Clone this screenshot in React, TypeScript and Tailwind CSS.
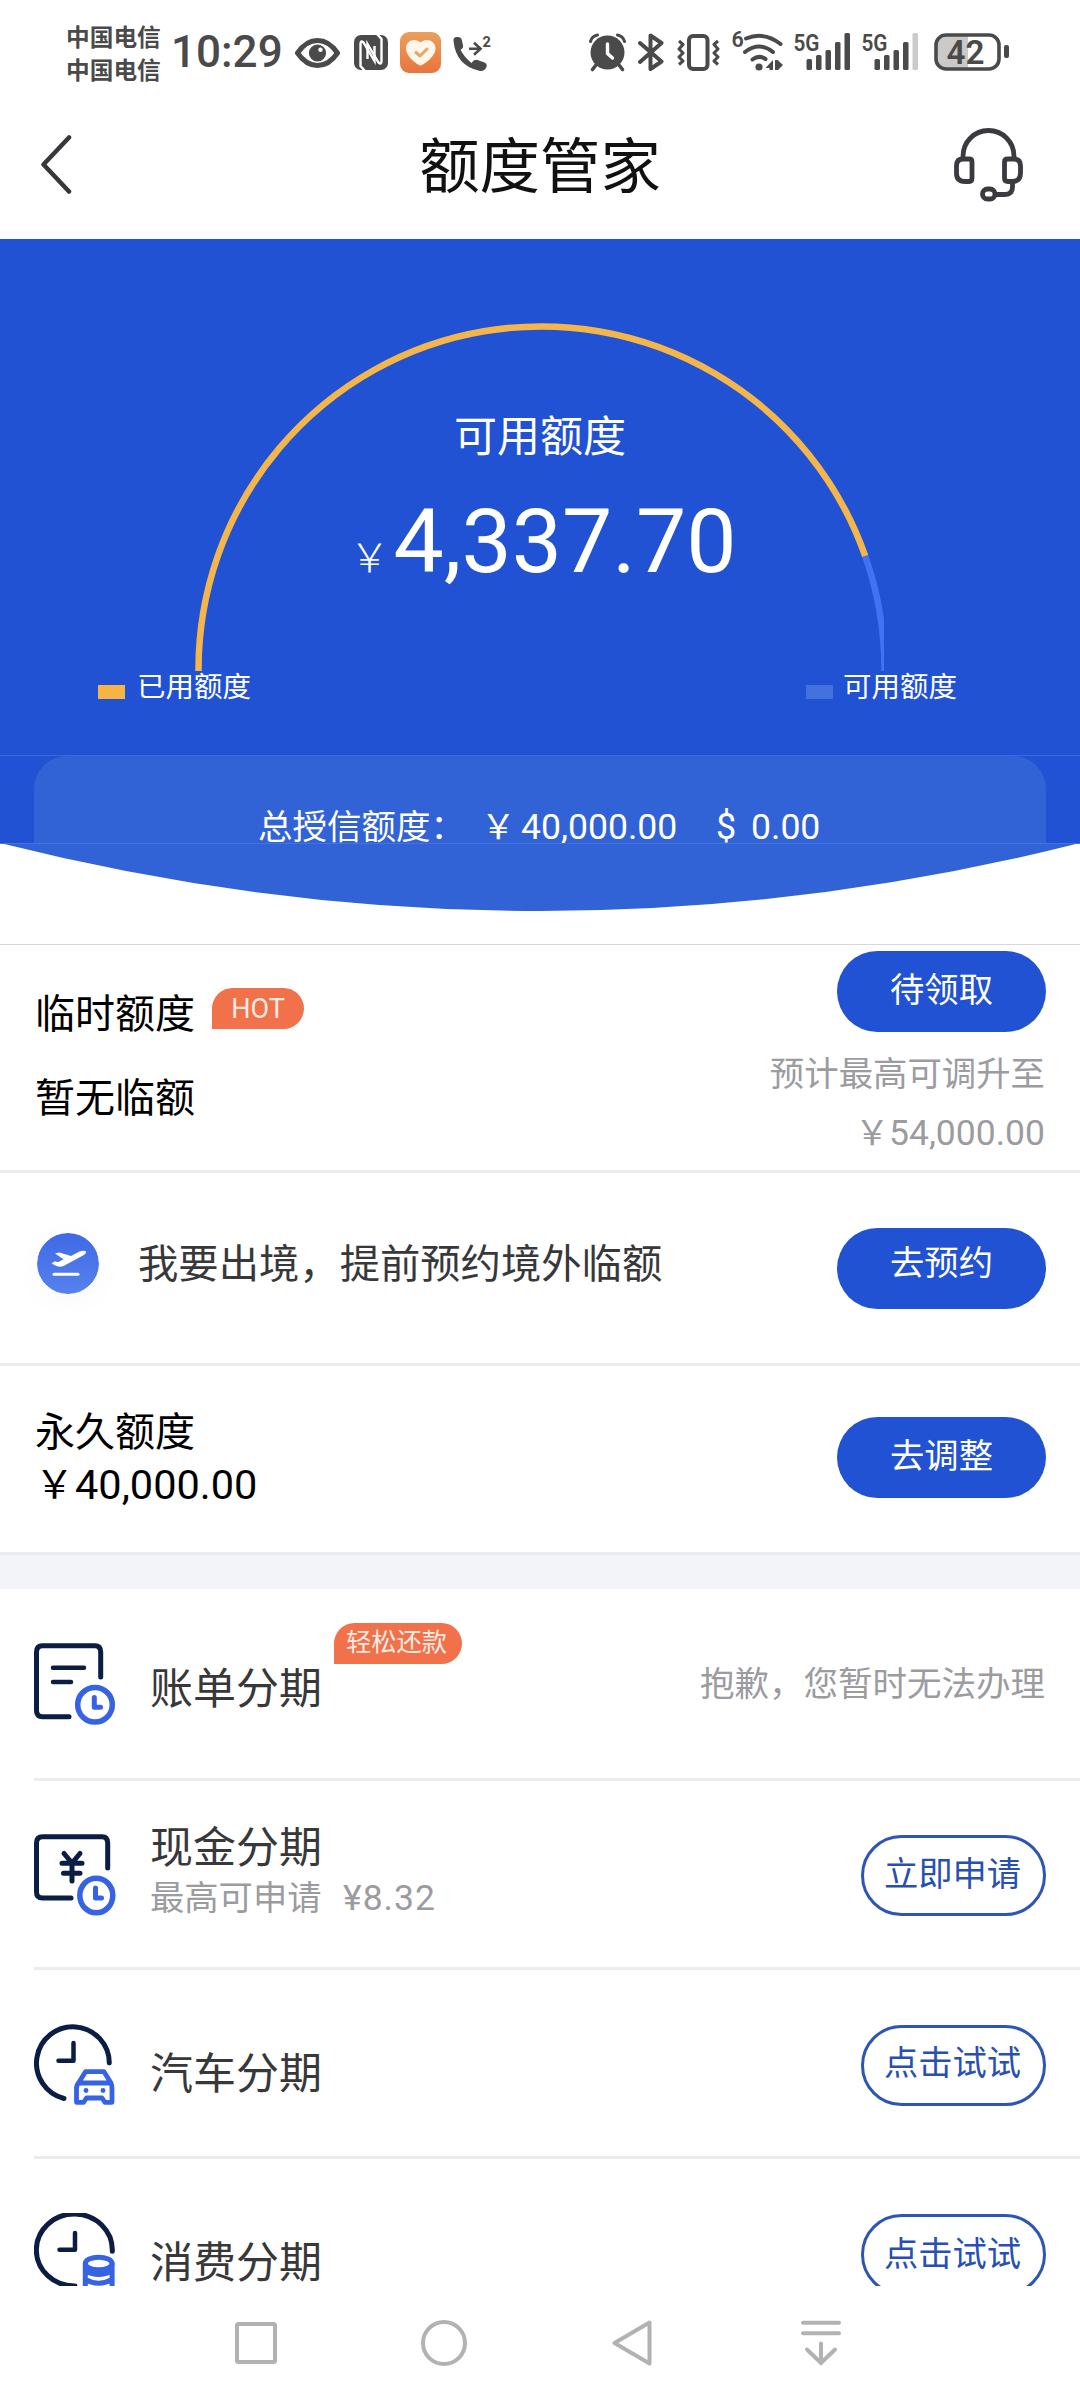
import React from "react";
import clsx from "clsx";

// --- Status bar icons ---
const EyeIcon = () => (
  <svg className="ml-[14px] h-[41px] w-[45px]" viewBox="0 0 45 41" fill="none">
    <path d="M2.5 21Q11 8.5 22.5 8.5T42.5 21Q34 33.5 22.5 33.5T2.5 21Z" stroke="#4a4a4a" strokeWidth="5" strokeLinejoin="round" />
    <circle cx="22.5" cy="21" r="8.6" fill="#4a4a4a" />
    <circle cx="25.5" cy="17.8" r="2.2" fill="#fff" />
  </svg>
);

const NfcIcon = () => (
  <svg className="ml-[14px] h-[41px] w-[34px]" viewBox="0 0 34 41" fill="none">
    <rect x="0" y="3" width="34" height="35" rx="7" fill="#4a4a4a" />
    <path d="M11 39L6.500 34V12Q6.500 8 9.500 10.500L20.500 29V14" stroke="#fff" strokeWidth="2.400" />
    <path d="M23 2L27.500 7V29Q27.500 33 24.500 30.500L13.500 12V27" stroke="#fff" strokeWidth="2.400" />
  </svg>
);

const HealthIcon = () => (
  <svg className="ml-[12px] h-[41px] w-[41px]" viewBox="0 0 41 41" fill="none">
    <defs>
      <linearGradient id="health" x1="0" y1="0" x2="0" y2="1">
        <stop offset="0" stopColor="#e9a05c" />
        <stop offset="1" stopColor="#e9743d" />
      </linearGradient>
    </defs>
    <rect width="41" height="41" rx="9" fill="url(#health)" />
    <path d="M20.500 33.500C18.500 33.500 6 25 6 16.500C6 8 15.500 5.500 20.500 10.500C25.500 5.500 35.500 8 35.500 16.500C35.500 25 22.500 33.500 20.500 33.500Z" fill="#fff6ea" />
    <path d="M16 20.500L20 24L27 17" stroke="#e5a868" strokeWidth="3" strokeLinecap="round" strokeLinejoin="round" />
  </svg>
);

const CallIcon = () => (
  <svg className="ml-[12px] h-[41px] w-[38px] overflow-visible" viewBox="0 0 38 41" fill="none">
    <path
      d="M.5 9Q0 5 4 5Q8 4.500 8.800 8L10 13.500Q10.500 16.500 7.500 17.800Q11 25 18.500 31Q21 27 24.500 28L31.500 30.500Q34.500 32 33.500 35Q31.500 39.500 27 39Q3 34 .5 9Z"
      fill="#4a4a4a"
    />
    <path d="M16 16.700H27M21 10.700L27.500 16.700L21 22.700" stroke="#4a4a4a" strokeWidth="2.600" />
    <text x="29.500" y="15" fontSize="14.500" fontWeight="700" fontFamily="Roboto, sans-serif" fill="#4a4a4a">2</text>
  </svg>
);

const AlarmIcon = () => (
  <svg className="h-[41px] w-[37px]" viewBox="0 0 37 41" fill="none">
    <circle cx="18.500" cy="20.500" r="17" fill="#4a4a4a" />
    <path d="M1.500 9.500Q3 4 8.500 3M35.500 9.500Q34 4 28.500 3" stroke="#4a4a4a" strokeWidth="3" strokeLinecap="round" />
    <path d="M7 33L3.500 37.500M30 33L33.500 37.500" stroke="#4a4a4a" strokeWidth="3.600" strokeLinecap="round" />
    <path d="M18.500 12V21.500L23.500 26" stroke="#fff" strokeWidth="3.400" strokeLinecap="round" />
  </svg>
);

const BluetoothIcon = () => (
  <svg className="ml-[12px] h-[41px] w-[26px]" viewBox="0 0 26 41" fill="none">
    <path d="M2 11L23.500 29.500L12.500 37V3.500L23.500 11L2 30" stroke="#4a4a4a" strokeWidth="4" strokeLinecap="round" strokeLinejoin="round" />
  </svg>
);

const VibrateIcon = () => (
  <svg className="ml-[13px] h-[41px] w-[43px]" viewBox="0 0 43 41" fill="none">
    <rect x="12" y="4" width="18.500" height="33" rx="4" stroke="#4a4a4a" strokeWidth="4" />
    <path d="M2 9L6 12.500L2 17L6 21L2 25L6 29L2 32.500" stroke="#4a4a4a" strokeWidth="3" strokeLinejoin="round" />
    <path d="M41 9L37 12.500L41 17L37 21L41 25L37 29L41 32.500" stroke="#4a4a4a" strokeWidth="3" strokeLinejoin="round" />
  </svg>
);

const WifiIcon = () => (
  <svg className="ml-[12px] h-[41px] w-[51px] overflow-visible" viewBox="0 0 51 41" fill="none">
    <text x="-.5" y="15" fontSize="21.500" fontWeight="600" fontFamily="Roboto, sans-serif" fill="#4a4a4a">6</text>
    <path d="M14 6.500Q32 -1 48.500 12" stroke="#4a4a4a" strokeWidth="4" strokeLinecap="round" />
    <path d="M13 20Q27.500 9 41 20" stroke="#4a4a4a" strokeWidth="4" strokeLinecap="round" />
    <path d="M20.500 27.500Q27 22.500 33.500 27" stroke="#4a4a4a" strokeWidth="4" strokeLinecap="round" />
    <circle cx="27" cy="35" r="3.600" fill="#4a4a4a" />
    <path d="M41 38V28L33.500 36H37.500V38ZM43 38V28H45.500L51 33L46 38Z" fill="#4a4a4a" />
  </svg>
);

const SignalIcon = ({ full }: { full: boolean }) => (
  <svg className="ml-[11px] h-[41px] w-[57px] overflow-visible" viewBox="0 0 57 41" fill="#4a4a4a">
    <text x="-.5" y="19" fontSize="24.500" fontWeight="600" textLength="26" lengthAdjust="spacingAndGlyphs" fontFamily="Roboto, sans-serif">
      5G
    </text>
    <rect x="12.500" y="27" width="5.500" height="11" rx="1.500" />
    <rect x="22" y="23" width="5.500" height="15" rx="1.500" />
    <rect x="31.500" y="18" width="5.500" height="20" rx="1.500" />
    <rect x="41" y="10" width="5.500" height="28" rx="1.500" />
    <rect x="50.500" y="1" width="5.500" height="37" rx="1.500" fill={full ? "#4a4a4a" : "#cacaca"} />
  </svg>
);

const BatteryIcon = () => (
  <svg className="ml-[15px] h-[41px] w-[75px]" viewBox="0 0 75 41" fill="none">
    <path d="M34 3H12Q2 3 2 13V26Q2 36 12 36H34Z" fill="#cacaca" />
    <rect x="2" y="3" width="63" height="34" rx="10" stroke="#4a4a4a" strokeWidth="3.600" />
    <rect x="70" y="13" width="5" height="13" rx="2" fill="#4a4a4a" />
    <text x="12.500" y="32" fontSize="34" fontWeight="600" textLength="38" lengthAdjust="spacingAndGlyphs" fontFamily="Roboto, sans-serif" fill="#4a4a4a">
      42
    </text>
  </svg>
);

const HeadsetIcon = () => (
  <svg className="h-[74px] w-[69px]" viewBox="0 0 69 74" fill="none" stroke="#3a3a3f" strokeWidth="4.800">
    <path d="M9 31V28A25.500 25.500 0 0 1 60 28V31" />
    <path d="M9 31H15Q18 31 18 34V50Q18 53.500 15 53.500H11Q2.500 53.500 2.500 45V38Q2.500 31 9 31Z" />
    <path d="M60 31H54Q50.500 31 50.500 34V50Q50.500 53.500 54 53.500H58Q66.500 53.500 66.500 45V38Q66.500 31 60 31Z" />
    <path d="M58.500 54V59Q58.500 66.500 51 66.500H42" />
    <rect x="28.500" y="61" width="12.500" height="10" rx="5" />
  </svg>
);

// --- Row icons ---
const TakeoffIcon = () => (
  <svg className="h-[61px] w-[62px] rounded-full shadow-[0_6px_30px_rgba(0,0,0,0.03)]" viewBox="0 0 62 61" fill="none">
    <defs>
      <linearGradient id="takeoff" x1="0" y1="0" x2="0" y2="1">
        <stop offset="0" stopColor="#4069e6" />
        <stop offset="1" stopColor="#5682ee" />
      </linearGradient>
    </defs>
    <ellipse cx="31" cy="30.500" rx="31" ry="30.500" fill="url(#takeoff)" />
    <path d="M18 20.500L22.500 19.500L34 23L42 18.800Q46 17.200 49 18.200Q49.500 20.500 46 22.500L27.500 32.500Q23 34.800 19.500 33L14.500 30.500L18 28.200L21 29.200L26.500 26.300Z" fill="#fff" />
    <path d="M17 41.300H41" stroke="#fff" strokeWidth="3" strokeLinecap="round" />
  </svg>
);

const iconClass = "h-[82px] w-[82px] shrink-0";

const BillIcon = () => (
  <svg className={iconClass} viewBox="0 0 82 82" fill="none" strokeLinecap="round" strokeLinejoin="round" strokeWidth="5">
    <path d="M66.700 34V9Q66.700 2.700 61 2.700H8.500Q2.500 2.700 2.500 9V67.500Q2.500 73.700 8.500 73.700H35" stroke="#0b1d42" />
    <path d="M19 24.700H50M19 39H37" stroke="#0b1d42" strokeWidth="4.500" />
    <circle cx="61" cy="61.700" r="17.300" stroke="#3563e3" strokeWidth="5.500" />
    <path d="M60.300 54.500V64.200H66.500" stroke="#3563e3" />
  </svg>
);

const CashIcon = () => (
  <svg className={iconClass} viewBox="0 0 82 82" fill="none" strokeLinecap="round" strokeLinejoin="round" strokeWidth="5">
    <path d="M73.700 34V9Q73.700 2.700 68 2.700H8.500Q2.500 2.700 2.500 9V58Q2.500 64 8.500 64H37" stroke="#0b1d42" />
    <path d="M30 19.500L38 29L46 19.500M28 29.300H48M29.500 39.300H46M38 29V47" stroke="#0b1d42" />
    <ellipse cx="62.300" cy="61.500" rx="16.500" ry="17.300" stroke="#3563e3" strokeWidth="5.500" />
    <path d="M61.500 54V64H67.500" stroke="#3563e3" />
  </svg>
);

const CarIcon = () => (
  <svg className={iconClass} viewBox="0 0 82 82" fill="none" strokeLinecap="round" strokeLinejoin="round" strokeWidth="5">
    <path d="M75.300 39A36.400 36.400 0 1 0 30 74.500" stroke="#0b1d42" />
    <path d="M39.500 19V36.700H24.500" stroke="#0b1d42" strokeWidth="4.500" />
    <path d="M44.500 59L51.500 47.700H70L77 59ZM44.500 59Q42.500 61 42.500 65V78.300H49.500L52.500 74H68L71 78.300H78V65Q78 61 77 59" stroke="#3563e3" strokeWidth="4.800" />
    <circle cx="52" cy="66.500" r="2.400" fill="#3563e3" />
    <circle cx="69" cy="66.500" r="2.400" fill="#3563e3" />
  </svg>
);

const CoinsIcon = () => (
  <svg className={iconClass} viewBox="0 0 82 82" fill="none" strokeLinecap="round" strokeLinejoin="round" strokeWidth="5">
    <path d="M78.300 38.300A38 36 0 1 0 41 73" stroke="#0b1d42" />
    <path d="M41 20V36.700H25.500" stroke="#0b1d42" strokeWidth="4.500" />
    <ellipse cx="64.700" cy="50.500" rx="13.400" ry="6.300" stroke="#3563e3" />
    <path d="M51.300 51V82M78.100 51V82M51.300 57.500Q64.700 65.500 78.100 57.500M51.300 66.500Q64.700 74 78.100 66.500" stroke="#3563e3" />
  </svg>
);

// --- Shared pieces ---
const SolidButton = ({ children, className }: { children: string; className?: string }) => (
  <button
    type="button"
    className={clsx("flex h-[81px] w-[209px] shrink-0 items-center justify-center rounded-full bg-[#2152d3] text-[34.3px] leading-[40px] text-white", className)}
  >
    {children}
  </button>
);

const OutlineButton = ({ children, className }: { children: string; className?: string }) => (
  <button
    type="button"
    className={clsx("flex h-[81px] w-[185px] shrink-0 items-center justify-center rounded-full border-[3px] border-[#2c55b6] pr-[2px] text-[34.3px] leading-[40px] text-[#2850b4]", className)}
  >
    {children}
  </button>
);

const Badge = ({ children, className }: { children: string; className?: string }) => (
  <span
    className={clsx("flex h-[41px] items-center justify-center rounded-[21px] rounded-bl-none bg-[#f0714a] text-[#fdebe2]", className)}
  >
    {children}
  </span>
);

interface PlanRowProps {
  icon: React.ReactNode;
  children: React.ReactNode;
  action: React.ReactNode;
  className?: string;
}

const PlanRow = ({ icon, children, action, className }: PlanRowProps) => (
  <div className={clsx("ml-[34px] flex min-h-[189px] shrink-0 items-center border-b-[3px] border-[#ececec] pt-[4px] pr-[34px]", className)}>
    {icon}
    <div className="ml-[34px] flex-1 text-[43px] leading-[56px] text-[#38383a]">{children}</div>
    {action}
  </div>
);

const App = () => {
  return (
    <div className="flex h-[2400px] w-[1080px] flex-col overflow-hidden bg-white font-['Roboto','Noto_Sans_CJK_SC',sans-serif] text-black">
      {/* Status bar */}
      <div className="flex h-[104px] shrink-0 items-center justify-between pr-[71px] pl-[66px] text-[#4a4a4a]">
        <div className="flex items-center">
          <div className="w-[96px] pt-[5px] text-[23.7px] leading-[33px] font-bold whitespace-nowrap">
            <p>中国电信</p>
            <p>中国电信</p>
          </div>
          <span className="ml-[9px] w-[110px] text-[44px] leading-[50px] font-medium">10:29</span>
          <EyeIcon />
          <NfcIcon />
          <HealthIcon />
          <CallIcon />
        </div>
        <div className="flex items-center">
          <AlarmIcon />
          <BluetoothIcon />
          <VibrateIcon />
          <WifiIcon />
          <SignalIcon full />
          <SignalIcon full={false} />
          <BatteryIcon />
        </div>
      </div>

      {/* Header */}
      <header className="mb-[13px] flex h-[122px] shrink-0 items-center justify-between pr-[57px] pl-[39px]">
        <svg className="h-[60px] w-[69px]" viewBox="0 0 69 60" fill="none">
          <path d="M30 2.500L4.500 29.500L30 56.500" stroke="#38383c" strokeWidth="4.500" strokeLinecap="round" strokeLinejoin="round" />
        </svg>
        <h1 className="mr-[-18px] pt-[5px] text-[60.4px] leading-[72px] text-[#111]">额度管家</h1>
        <HeadsetIcon />
      </header>

      <main className="flex h-[2047px] shrink-0 flex-col overflow-hidden">
        {/* Gauge */}
        <section className="relative h-[517px] shrink-0 border-b border-[#3a6adb] bg-[#2152d3] pt-[170px] text-white">
          <svg className="absolute top-0 left-0 h-[516px] w-[884px]" viewBox="0 0 884 516" fill="none" strokeWidth="6.500">
            <path d="M865.200 317A343 343 0 0 1 884.500 430.500V432" stroke="#4272f2" />
            <path d="M198.500 432V430.500A343 343 0 0 1 865.200 317" stroke="#f4b54a" />
          </svg>
          <p className="text-center text-[43px] leading-[56px]">可用额度</p>
          <p className="mt-[27px] flex items-baseline justify-center pl-[6px] leading-[100px]">
            <span className="w-[44px] text-[40px] font-light">￥</span>
            <span className="text-[89.5px]">4,337.70</span>
          </p>
          <div className="mt-[64px] flex justify-between pr-[123px] pl-[98px] text-[28.5px] leading-[30px]">
            <span className="flex items-center">
              <i className="mt-[7px] mr-[12px] h-[14px] w-[27px] bg-[#f6b440]" />
              已用额度
            </span>
            <span className="flex items-center">
              <i className="mt-[7px] mr-[10px] h-[14px] w-[27px] bg-[#4372df]" />
              可用额度
            </span>
          </div>
        </section>

        {/* Total credit */}
        <section className="h-[87px] shrink-0 bg-[#2152d3] px-[34px] text-[34.5px] leading-[40px] text-white">
          <div className="flex h-full rounded-t-[33px] bg-[#3263d6] pt-[51px] pl-[224px] whitespace-nowrap">
            <span className="w-[223px]">总授信额度：</span>
            <span className="w-[40px]">￥</span>
            <span className="w-[195px] text-[35.6px]">40,000.00</span>
            <span className="w-[35px] text-[36px]">$</span>
            <span className="text-[35.6px]">0.00</span>
          </div>
        </section>
        <svg className="h-[70px] w-[1080px] shrink-0" viewBox="0 0 1080 70" fill="none">
          <path d="M0 0H1080Q540 136 0 0Z" fill="#3263d6" />
          <path d="M0 .5H1080" stroke="#4373df" />
        </svg>

        {/* Temporary limit */}
        <section className="mt-[31px] flex h-[229px] shrink-0 justify-between border-t border-b-[3px] border-t-[#d6d8dc] border-b-[#ececec] pr-[34px] pl-[35px]">
          <div className="pt-[42px] text-[40px] leading-[56px]">
            <div className="flex">
              <h2>临时额度</h2>
              <Badge className="mt-[1px] ml-[17px] w-[92px] text-[27px]">HOT</Badge>
            </div>
            <p className="mt-[28px]">暂无临额</p>
          </div>
          <div className="flex flex-col items-end pt-[6px] text-[34.4px] leading-[40px] text-[#9b9ba0]">
            <SolidButton className="pb-[3px]">待领取</SolidButton>
            <p className="mt-[22px] mr-[1px]">预计最高可调升至</p>
            <p className="mt-[19px] mr-[1px] flex">
              <span className="w-[34px]">￥</span>
              <span className="text-[35.5px]">54,000.00</span>
            </p>
          </div>
        </section>

        {/* Overseas limit */}
        <section className="flex h-[193px] shrink-0 items-center border-b-[3px] border-[#ececec] pr-[34px] pl-[37px]">
          <div className="mb-[10px] flex flex-1 items-center">
            <TakeoffIcon />
            <p className="ml-[39px] pt-[4px] text-[40.35px] leading-[56px] text-[#38383a]">我要出境，提前预约境外临额</p>
          </div>
          <SolidButton className="pb-[10px]">去预约</SolidButton>
        </section>

        {/* Permanent limit */}
        <section className="flex h-[189px] shrink-0 items-center justify-between border-b-[3px] border-[#e9ebee] pr-[34px] pb-[3px] pl-[35px]">
          <div className="text-[40px] leading-[54px]">
            <h2 className="mt-[3px] mb-[-2px]">永久额度</h2>
            <p className="flex">
              <span className="w-[40px] text-[39px]">￥</span>
              <span className="text-[41.5px]">40,000.00</span>
            </p>
          </div>
          <SolidButton className="pb-[3px]">去调整</SolidButton>
        </section>

        <div className="h-[34px] shrink-0 bg-[#f2f4f9]" />

        {/* Instalment plans */}
        <PlanRow
          className="h-[192px] pb-[4px]"
          icon={<BillIcon />}
          action={<span className="mr-[1px] text-[34.5px] leading-[40px] text-[#9b9ba0]">抱歉，您暂时无法办理</span>}
        >
          <div className="relative pt-[10px]">
            账单分期
            <Badge className="absolute top-[-28px] left-[184px] w-[128px] pr-[3px] text-[25.3px]">轻松还款</Badge>
          </div>
        </PlanRow>
        <PlanRow className="pb-[2px]" icon={<CashIcon />} action={<OutlineButton className="pb-[2px]">立即申请</OutlineButton>}>
          <p className="mt-[-8px]">现金分期</p>
          <p className="mt-[-2px] flex text-[34.3px] leading-[48px] text-[#9b9ba0]">
            <span className="w-[193px]">最高可申请</span>
            <span className="text-[35.5px] tracking-[1px]">¥8.32</span>
          </p>
        </PlanRow>
        <PlanRow icon={<CarIcon />} action={<OutlineButton className="pb-[4px]">点击试试</OutlineButton>}>
          <p className="pt-[18px]">汽车分期</p>
        </PlanRow>
        <PlanRow icon={<CoinsIcon />} action={<OutlineButton>点击试试</OutlineButton>}>
          <p className="pt-[18px]">消费分期</p>
        </PlanRow>
      </main>

      {/* System navigation */}
      <nav className="flex h-[114px] shrink-0 items-center pl-[235px]">
        <svg className="h-[42px] w-[42px]" viewBox="0 0 42 42" fill="none">
          <rect x="2" y="2" width="38" height="38" rx="1.500" stroke="#b2b2b2" strokeWidth="4" />
        </svg>
        <svg className="ml-[144px] h-[46px] w-[46px]" viewBox="0 0 46 46" fill="none">
          <circle cx="23" cy="23" r="21" stroke="#b2b2b2" strokeWidth="4" />
        </svg>
        <svg className="ml-[145px] h-[46px] w-[40px]" viewBox="0 0 40 46" fill="none">
          <path d="M37.500 2.500V43.500L2.500 23Z" stroke="#b2b2b2" strokeWidth="4" strokeLinejoin="round" />
        </svg>
        <svg className="ml-[149px] h-[46px] w-[40px]" viewBox="0 0 40 46" fill="none" stroke="#b2b2b2" strokeWidth="4" strokeLinecap="round">
          <path d="M2 2.700H38M2 13.200H38M20 23.500V43M6 29.500L20 43L34 29.500" />
        </svg>
      </nav>
    </div>
  );
};

export default App;
